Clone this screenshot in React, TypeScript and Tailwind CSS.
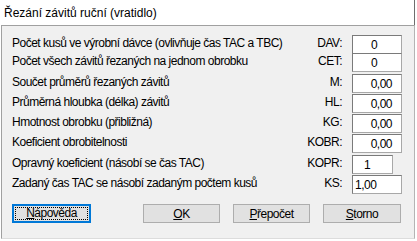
const rows = [
  { label: "Počet kusů ve výrobní dávce (ovlivňuje čas TAC a TBC)", code: "DAV:", value: "0", row: "h-[18px]", box: "w-[50px] pl-[18px]" },
  { label: "Počet všech závitů řezaných na jednom obrobku", code: "CET:", value: "0", row: "h-[21px]", box: "w-[50px] pl-[18px]" },
  { label: "Součet průměrů řezaných závitů", code: "M:", value: "0,00", row: "h-[20px]", box: "w-[50px] justify-end pr-[9px]" },
  { label: "Průměrná hloubka (délka) závitů", code: "HL:", value: "0,00", row: "h-[20px]", box: "w-[50px] justify-end pr-[9px]" },
  { label: "Hmotnost obrobku (přibližná)", code: "KG:", value: "0,00", row: "h-[20px]", box: "w-[50px] justify-end pr-[9px]" },
  { label: "Koeficient obrobitelnosti", code: "KOBR:", value: "0,00", row: "h-[21px]", box: "w-[50px] justify-end pr-[9px]" },
  { label: "Opravný koeficient (násobí se čas TAC)", code: "KOPR:", value: "1", row: "h-[20px]", box: "w-[41px] pl-[11px]" },
  { label: "Zadaný čas TAC se násobí zadaným počtem kusů", code: "KS:", value: "1,00", row: "h-[20px]", box: "w-[50px] pl-[2px]" },
];

function Key({ k, rest }: { k: string; rest: string }) {
  return (
    <span>
      <span className="underline underline-offset-[1px]">{k}</span>
      {rest}
    </span>
  );
}

export default function App() {
  return (
    <div
      className="w-[417px] h-[241px] bg-white text-black text-[12px] tracking-[-0.5px] leading-none overflow-hidden"
      style={{ fontFamily: '"Liberation Sans", Arial, sans-serif' }}
    >
      <div className="w-[415px] h-[25px] border-r border-[#6e6e6e] flex items-center pl-[4px] text-[12px] tracking-normal">
        Řezání závitů ruční (vratidlo)
      </div>

      <div className="ml-[1px] w-[414px] h-[214px] bg-[#f0f0f0] border-l border-t border-[#a0a0a0] border-r border-r-[#b4b4b4] border-b border-b-[#dcdcdc] pl-[10px] pr-[12px] pt-[9px]">
        {rows.map((r) => (
          <div key={r.code} className={`flex items-start ${r.row}`}>
            <div className="flex-1 min-w-0 h-[19px] flex items-center pb-[3px] whitespace-nowrap">{r.label}</div>
            <div className="w-[60px] h-[19px] flex items-center justify-end pb-[3px]">{r.code}</div>
            <div className="w-[50px] ml-[10px]">
              <div
                className={`h-[19px] bg-white border border-[#7a7a7a] border-r-[#a8a8a8] border-b-[#a8a8a8] flex items-center ${r.box}`}
              >
                {r.value}
              </div>
            </div>
          </div>
        ))}

        <div className="flex mt-[9px] h-[19px]">
          <div className="w-[79px] h-[19px] border-2 border-[#0078d7] bg-[#e1e1e1] p-[1px]">
            <div className="h-full border border-dotted border-black flex items-center justify-center pb-[1px]">
              <Key k="N" rest="ápověda" />
            </div>
          </div>
          <div className="ml-[52px] w-[77px] h-[19px] border border-[#adadad] bg-[#e1e1e1] flex items-center justify-center">
            <Key k="O" rest="K" />
          </div>
          <div className="ml-[13px] w-[77px] h-[19px] border border-[#adadad] bg-[#e1e1e1] flex items-center justify-center">
            <Key k="P" rest="řepočet" />
          </div>
          <div className="ml-[13px] w-[78px] h-[19px] border border-[#adadad] bg-[#e1e1e1] flex items-center justify-center">
            <Key k="S" rest="torno" />
          </div>
        </div>
      </div>
    </div>
  );
}
